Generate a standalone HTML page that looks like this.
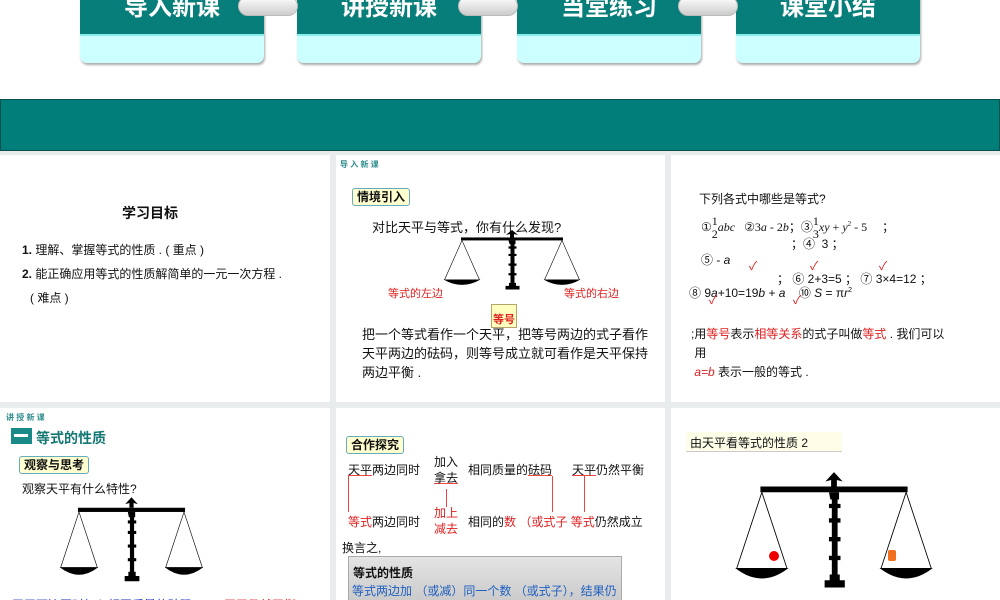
<!DOCTYPE html>
<html><head><meta charset="utf-8"><style>
*{margin:0;padding:0;box-sizing:border-box}
body{width:1000px;height:600px;overflow:hidden;background:#fff;position:relative;font-family:"Liberation Sans","Noto Sans CJK SC",sans-serif;color:#111}
.a{position:absolute;white-space:nowrap}
.tab{position:absolute;top:-10px;width:184px;height:73px;border-radius:0 0 7px 7px;background:#ccffff;box-shadow:1px 2px 2px #aaa;overflow:hidden}
.tab .t{height:46px;background:#087e7a;color:#fff;font-weight:bold;font-size:24px;text-align:center;line-height:36px;border-bottom:2px solid #8ee}
.con{position:absolute;top:-4px;width:60px;height:20px;border-radius:10px;background:linear-gradient(#fff,#ccc);border:1px solid #bbb}
.p{position:absolute;background:#fff;overflow:hidden}
.lbl{position:absolute;border:1.5px solid #6ab;border-radius:3px;background:#ffffd0;font-weight:bold;font-size:12px;padding:1px 4px;line-height:14px}
.red{color:#e02020}
.f13{font-size:13px}
.f12{font-size:12px}
</style></head><body>
<div class="tab" style="left:80px"><div class="t">导入新课</div></div>
<div class="tab" style="left:297px"><div class="t">讲授新课</div></div>
<div class="tab" style="left:517px"><div class="t">当堂练习</div></div>
<div class="tab" style="left:736px"><div class="t">课堂小结</div></div>
<div class="con" style="left:238px"></div><div class="con" style="left:458px"></div><div class="con" style="left:678px"></div>

<div style="position:absolute;left:0;top:99px;width:1000px;height:52px;background:#007f7a;border:1px solid #0d4f4c"></div>
<div style="position:absolute;left:0;top:151px;width:1000px;height:449px;background:#e8ecec"></div>

<svg width="0" height="0" style="position:absolute"><defs><g id="bal">
<rect x="18" y="20" width="204" height="8" fill="#000"/>
<path d="M120 0 L108 13 L116 11 L116 20 L124 20 L124 11 L132 13Z" fill="#000"/>
<path d="M113 28 h14 v10 h-2 v6 h4 v6 h-4 v14 h4 v6 h-4 v20 h4 v6 h-4 v20 h4 v6 h-4 v20 h3 v8 h7 v10 h-28 v-10 h7 v-8 h3 v-20 h-4 v-6 h4 v-20 h-4 v-6 h4 v-20 h-4 v-6 h4 v-14 h-4 v-6 h4 v-6 h-2z" fill="#000"/>
<path d="M20 28 L-15 134 M20 28 L55 134 M220 28 L185 134 M220 28 L255 134" stroke="#000" stroke-width="1.2" fill="none"/>
<path d="M-17 133 H57 Q20 162 -17 133Z M183 133 H257 Q220 162 183 133Z" fill="#000"/>
</g></defs></svg>

<!-- panel 1 -->
<div class="p" style="left:0;top:155px;width:330px;height:247px">
<div class="a" style="left:122px;top:48px;font-weight:bold;font-size:14px">学习目标</div>
<div class="a f12" style="left:22px;top:86px"><b>1.</b> 理解、掌握等式的性质 . ( 重点 )</div>
<div class="a f12" style="left:22px;top:110px"><b>2.</b> 能正确应用等式的性质解简单的一元一次方程 .</div>
<div class="a f12" style="left:30px;top:134px">( 难点 )</div>
</div>
<!-- panel 2 -->
<div class="p" style="left:336px;top:155px;width:329px;height:247px">
<div class="a" style="left:4px;top:4px;font-size:8px;color:#2a8a8a;font-weight:bold">导 入 新 课</div>
<div class="lbl" style="left:16px;top:33px">情境引入</div>
<div class="a f13" style="left:36px;top:62px">对比天平与等式，你有什么发现?</div>
<svg style="position:absolute;left:106px;top:75px" width="140" height="67" viewBox="-20 0 280 180" preserveAspectRatio="none"><use href="#bal"/></svg>
<div class="a f12 red" style="left:52px;top:130px;font-size:11px">等式的左边</div>
<div class="a f12 red" style="left:228px;top:130px;font-size:11px">等式的右边</div>
<div class="a" style="left:155px;top:149px;width:26px;height:24px;background:#ffffc0;border:1px solid #b9a36a;font-size:11px;font-weight:bold;color:#e02020;text-align:center;line-height:30px">等号</div>
<div class="a f13" style="left:26px;top:170px;line-height:19px">把一个等式看作一个天平，把等号两边的式子看作<br>天平两边的砝码，则等号成立就可看作是天平保持<br>两边平衡 .</div>
</div>
<!-- panel 3 -->
<div class="p" style="left:671px;top:155px;width:329px;height:247px">
<div class="a f12" style="left:28px;top:35px">下列各式中哪些是等式?</div>
<div class="a f12" style="left:30px;top:60px;font-family:'Liberation Serif',serif">①<span style="display:inline-block;text-align:center;vertical-align:middle;line-height:13px">1<br>2</span><i>abc</i> &nbsp; ②3<i>a</i> - 2<i>b</i>；③<span style="display:inline-block;text-align:center;vertical-align:middle;line-height:13px">1<br>3</span><i>xy</i> + <i>y</i><sup style="font-size:7px">2</sup> - 5 &nbsp; &nbsp; ；</div>
<div class="a f12" style="left:120px;top:80px">；④ &nbsp;3 ；</div>
<div class="a f12" style="left:30px;top:96px">⑤ - <i>a</i></div>
<div class="a f12 red" style="left:78px;top:102px">✓</div><div class="a f12 red" style="left:139px;top:102px">✓</div><div class="a f12 red" style="left:208px;top:102px">✓</div>
<div class="a f12" style="left:106px;top:115px">； ⑥ 2+3=5 ； ⑦ 3×4=12 ；</div>
<div class="a f12" style="left:18px;top:129px">⑧ 9<i>a</i>+10=19<i>b</i> + <i>a</i> &nbsp; &nbsp;⑩ <i>S</i> = π<i>r</i><sup style="font-size:7px">2</sup></div>
<div class="a f12 red" style="left:38px;top:136px">✓</div><div class="a f12 red" style="left:122px;top:136px">✓</div>
<div class="a f12" style="left:20px;top:170px;line-height:19px">;用<span class="red">等号</span>表示<span class="red">相等关系</span>的式子叫做<span class="red">等式</span> . 我们可以<br>&nbsp;用<br>&nbsp;<i class="red">a=b</i> 表示一般的等式 .</div>
</div>
<!-- panel 4 -->
<div class="p" style="left:0;top:408px;width:330px;height:192px">
<div class="a" style="left:6px;top:4px;font-size:8px;color:#2a8a8a;font-weight:bold">讲 授 新 课</div>
<div class="a" style="left:11px;top:20px;width:21px;height:16px;background:#1a8a88"></div>
<div class="a" style="left:14px;top:26px;width:14px;height:3px;background:#fff"></div>
<div class="a" style="left:36px;top:20px;font-size:14px;font-weight:bold;color:#137873">等式的性质</div>
<div class="lbl" style="left:19px;top:48px">观察与思考</div>
<div class="a f12" style="left:22px;top:72px">观察天平有什么特性?</div>
<svg style="position:absolute;left:58px;top:89px" width="147" height="95" viewBox="-20 0 280 180"><use href="#bal"/></svg>
<div class="a f12" style="left:12px;top:188px;color:#1530c0">天平两边同时加入相同质量的砝码，<span class="red" style="margin-left:20px">天平仍然平衡</span></div>
</div>
<!-- panel 5 -->
<div class="p" style="left:336px;top:408px;width:329px;height:192px">
<div class="lbl" style="left:10px;top:28px">合作探究</div>
<div class="a f12" style="left:12px;top:53px"><u style="text-decoration-color:#e44">天平</u>两边同时</div>
<div class="a f12" style="left:98px;top:46px;line-height:16px">加入<br><u style="text-decoration-color:#e44">拿去</u></div>
<div class="a f12" style="left:132px;top:53px">相同质量的<u style="text-decoration-color:#e44">砝码</u></div>
<div class="a f12" style="left:236px;top:53px"><u style="text-decoration-color:#e44">天平</u>仍然平衡</div>
<div class="a" style="left:12px;top:68px;width:1px;height:36px;background:#e44"></div>
<div class="a" style="left:110px;top:81px;width:1px;height:18px;background:#e44"></div>
<div class="a" style="left:216px;top:68px;width:1px;height:36px;background:#e44"></div>
<div class="a" style="left:248px;top:68px;width:1px;height:36px;background:#e44"></div>
<div class="a f12" style="left:12px;top:105px"><span class="red">等式</span>两边同时</div>
<div class="a f12 red" style="left:98px;top:97px;line-height:16px">加上<br>减去</div>
<div class="a f12" style="left:132px;top:105px">相同的<span class="red">数 （或式子</span> <span class="red">等式</span>仍然成立</div>
<div class="a f12" style="left:6px;top:131px">换言之,</div>
<div class="a" style="left:12px;top:148px;width:274px;height:50px;background:linear-gradient(#e4e4e4,#c8c8c8);border:1px solid #aaa"></div>
<div class="a f12" style="left:17px;top:156px;font-weight:bold">等式的性质</div>
<div class="a f12" style="left:16px;top:174px;color:#2060c0">等式两边加 （或减）同一个数 （或式子），结果仍</div>
</div>
<!-- panel 6 -->
<div class="p" style="left:671px;top:408px;width:329px;height:192px">
<div class="a f12" style="left:15px;top:24px;width:156px;height:20px;background:#fdfde8;border-bottom:1px solid #ccc;padding:2px 4px">由天平看等式的性质 2</div>
<svg style="position:absolute;left:62px;top:64px" width="202" height="130" viewBox="-20 0 280 180"><use href="#bal"/></svg>
<div class="a" style="left:98px;top:143px;width:10px;height:10px;border-radius:50%;background:#e00"></div>
<div class="a" style="left:217px;top:142px;width:8px;height:11px;border-radius:2px;background:#f07020"></div>
</div>
</body></html>
